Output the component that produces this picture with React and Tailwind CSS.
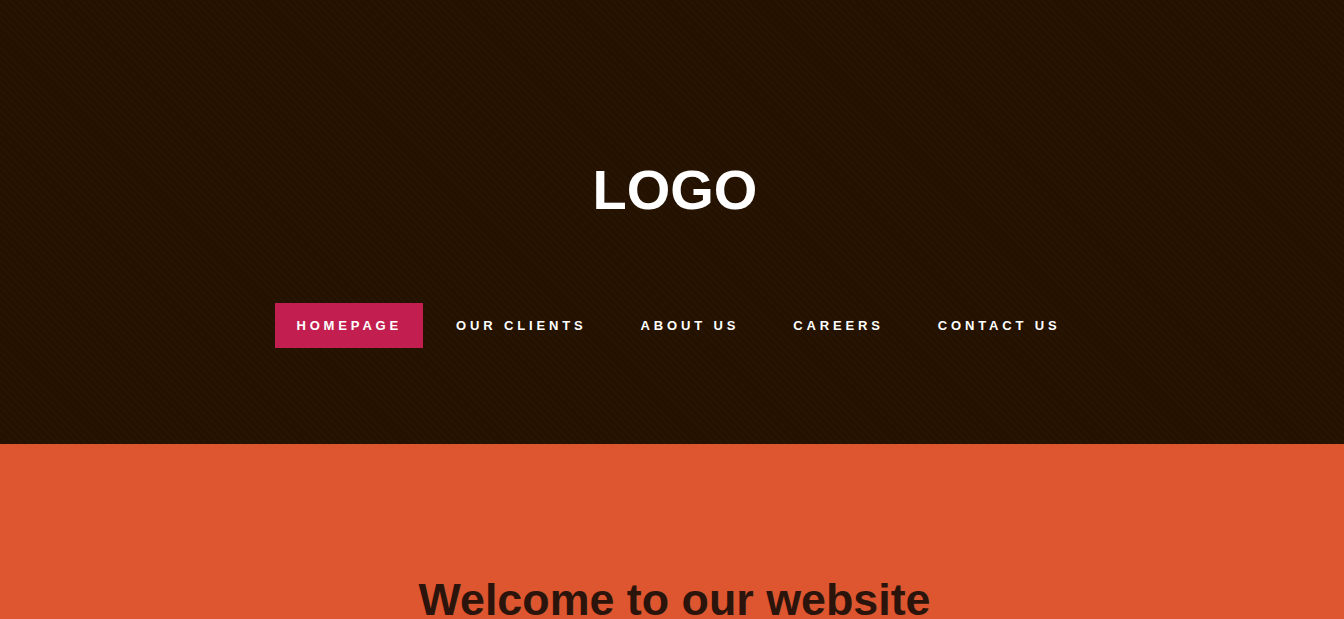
export default function App() {
  const items = ["HOMEPAGE", "OUR CLIENTS", "ABOUT US", "CAREERS", "CONTACT US"];
  return (
    <div className="min-h-screen w-full" style={{ fontFamily: '"Liberation Sans", Arial, sans-serif' }}>
      <header className="h-[444px] bg-[#241100] bg-[repeating-linear-gradient(45deg,rgba(255,255,255,0.015)_0px,rgba(255,255,255,0.015)_2px,transparent_2px,transparent_5px)] pt-[162px] flex flex-col items-center">
        <h1 className="text-[56px] leading-[56px] font-bold text-white m-0 ml-[6px]">LOGO</h1>
        <nav className="mt-[85px] flex gap-[12px] ml-[13px]">
          {items.map((t, i) => (
            <a
              key={t}
              className={
                "block px-[21px] py-[16px] text-[13px] leading-[13px] font-bold tracking-[3.85px] text-white " +
                (i === 0 ? "bg-[#c21f50]" : "")
              }
            >
              {t}
            </a>
          ))}
        </nav>
      </header>
      <section className="bg-[#dd562f] pt-[128px] flex justify-center">
        <h2 className="text-[44.8px] leading-[54px] font-bold text-[#2a140b] m-0 ml-[5px]">Welcome to our website</h2>
      </section>
    </div>
  );
}
